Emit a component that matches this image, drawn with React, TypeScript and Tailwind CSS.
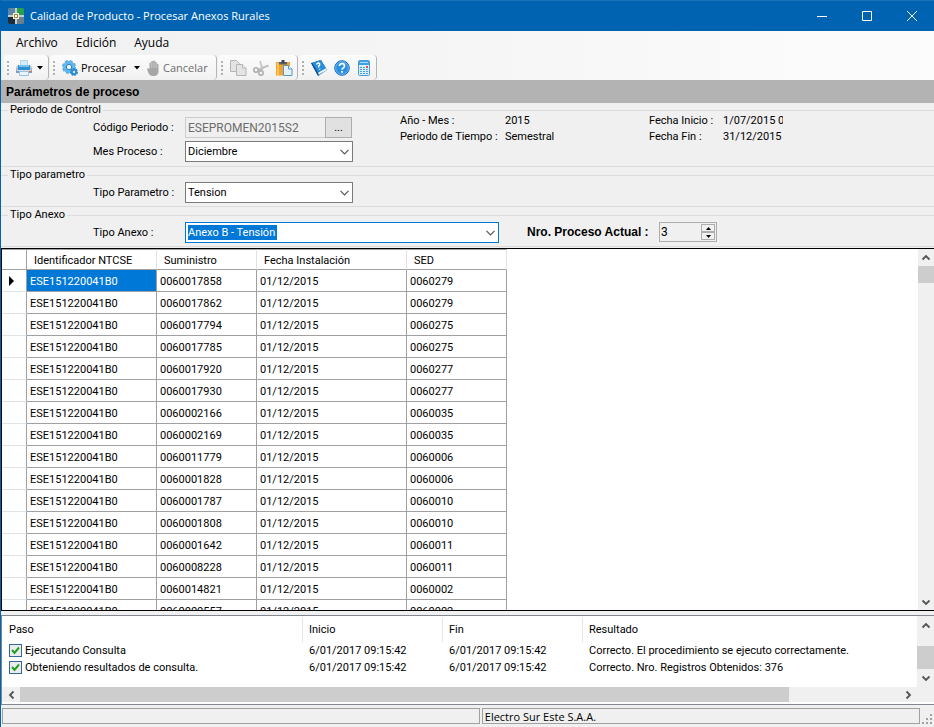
import React, { useState } from "react"

const ROWS = [
  { suministro: "0060017858", sed: "0060279" },
  { suministro: "0060017862", sed: "0060279" },
  { suministro: "0060017794", sed: "0060275" },
  { suministro: "0060017785", sed: "0060275" },
  { suministro: "0060017920", sed: "0060277" },
  { suministro: "0060017930", sed: "0060277" },
  { suministro: "0060002166", sed: "0060035" },
  { suministro: "0060002169", sed: "0060035" },
  { suministro: "0060011779", sed: "0060006" },
  { suministro: "0060001828", sed: "0060006" },
  { suministro: "0060001787", sed: "0060010" },
  { suministro: "0060001808", sed: "0060010" },
  { suministro: "0060001642", sed: "0060011" },
  { suministro: "0060008228", sed: "0060011" },
  { suministro: "0060014821", sed: "0060002" },
  { suministro: "0060000557", sed: "0060002" },
]

const STEPS = [
  {
    step: "Ejecutando Consulta",
    start: "6/01/2017 09:15:42",
    end: "6/01/2017 09:15:42",
    result: "Correcto. El procedimiento se ejecuto correctamente.",
  },
  {
    step: "Obteniendo resultados de consulta.",
    start: "6/01/2017 09:15:42",
    end: "6/01/2017 09:15:42",
    result: "Correcto. Nro. Registros Obtenidos: 376",
  },
]

export default function App() {
  return (
    <div className="flex h-screen flex-col overflow-hidden border-l border-[#0063b1] bg-[#f0f0f0] font-[Roboto,'Liberation_Sans',sans-serif] text-[11px] leading-4 text-black">
      <TitleBar />
      <div className="bg-linear-to-r from-[#f0f0f0] to-[#fcfcfc] font-['Open_Sans','Noto_Sans',sans-serif] text-[11px]">
        <MenuBar />
        <ToolBar />
      </div>
      <h2 className="flex h-[23px] shrink-0 items-center bg-[#b3b3b3] px-[5px] font-['Liberation_Sans',sans-serif] text-xs font-bold">
        Parámetros de proceso
      </h2>
      <Parameters />
      <ResultsGrid />
      <StepsList />
      <StatusBar />
    </div>
  )
}

const TitleBar = () => {
  return (
    <header className="flex h-[31px] shrink-0 items-center justify-between border-t border-[#1a72b9] bg-[#0063b1] pl-[7px] text-white">
      <div className="flex items-center gap-1.5">
        <AppLogo />
        <h1 className="font-['Open_Sans','Noto_Sans',sans-serif] text-[11px]">
          Calidad de Producto - Procesar Anexos Rurales
        </h1>
      </div>
      <div className="flex">
        <WindowButton label="Minimizar">
          <path d="M0 5.5h10" />
        </WindowButton>
        <WindowButton label="Maximizar">
          <path d="M.5 .5h9v9h-9z" />
        </WindowButton>
        <WindowButton label="Cerrar">
          <path d="M0 0l10 10M10 0L0 10" />
        </WindowButton>
      </div>
    </header>
  )
}

const WindowButton = ({
  label,
  children,
}: {
  label: string
  children: React.ReactNode
}) => {
  return (
    <button
      type="button"
      aria-label={label}
      className="flex h-7 w-[45px] items-center justify-center"
    >
      <svg width="10" height="10" fill="none" stroke="white" strokeWidth="1">
        {children}
      </svg>
    </button>
  )
}

const MenuBar = () => {
  return (
    <nav className="flex h-6 items-center gap-[18px] px-[15px] text-xs">
      {["Archivo", "Edición", "Ayuda"].map((item) => (
        <button type="button" key={item}>
          {item}
        </button>
      ))}
    </nav>
  )
}

const ToolBar = () => {
  return (
    <div className="flex h-[25px] gap-px pl-[3px]">
      <ToolStrip>
        <button
          type="button"
          aria-label="Imprimir"
          className="flex items-center gap-1"
        >
          <PrinterIcon />
          <DropArrow />
        </button>
      </ToolStrip>
      <ToolStrip>
        <button type="button" className="flex items-center gap-[3px]">
          <GearIcon />
          Procesar
        </button>
        <button type="button" aria-label="Opciones de proceso">
          <DropArrow />
        </button>
        <button
          type="button"
          disabled
          className="flex items-center gap-1 pr-[3px] text-[#6d6d6d]"
        >
          <HandIcon />
          Cancelar
        </button>
      </ToolStrip>
      <ToolStrip>
        <button type="button" aria-label="Copiar" disabled>
          <CopyIcon />
        </button>
        <button type="button" aria-label="Cortar" disabled>
          <CutIcon />
        </button>
        <button type="button" aria-label="Pegar">
          <PasteIcon />
        </button>
      </ToolStrip>
      <ToolStrip>
        <button type="button" aria-label="Contenido">
          <BookIcon />
        </button>
        <button type="button" aria-label="Ayuda">
          <HelpIcon />
        </button>
        <button type="button" aria-label="Calculadora">
          <CalculatorIcon />
        </button>
      </ToolStrip>
    </div>
  )
}

const ToolStrip = ({ children }: { children: React.ReactNode }) => {
  return (
    <div className="flex items-center gap-[7px] rounded-sm border-r border-[#b4b4b4] bg-linear-to-b from-[#fcfcfc] to-[#f1f1f1] pr-[5px] pl-[3px]">
      <svg width="2" height="14" fill="#b0b0b0">
        <path d="M0 0h2v2H0zM0 4h2v2H0zM0 8h2v2H0zM0 12h2v2H0z" />
      </svg>
      {children}
    </div>
  )
}

const Parameters = () => {
  return (
    <form className="flex shrink-0 flex-col gap-px pb-px">
      <Group title="Periodo de Control" className="h-16">
        <div className="flex items-start">
          <div className="flex flex-col gap-[3px]">
            <Field label="Código Periodo :" htmlFor="periodo">
              <input
                id="periodo"
                disabled
                defaultValue="ESEPROMEN2015S2"
                className="h-[21px] w-[140px] border border-r-0 border-[#cccccc] px-0.5 text-xs text-[#6d6d6d]"
              />
              <button
                type="button"
                aria-label="Buscar periodo"
                className="h-[21px] w-[27px] border border-[#adadad] bg-[#e1e1e1]"
              >
                ...
              </button>
            </Field>
            <Field label="Mes Proceso :" htmlFor="mes">
              <Combo id="mes" value="Diciembre" />
            </Field>
          </div>
          <dl className="-mt-1 ml-[47px] grid grid-cols-[105px_144px_74px_60px] whitespace-nowrap">
            <dt>Año - Mes :</dt>
            <dd>2015</dd>
            <dt>Fecha Inicio :</dt>
            <dd className="overflow-hidden">1/07/2015 0</dd>
            <dt>Periodo de Tiempo :</dt>
            <dd>Semestral</dd>
            <dt>Fecha Fin :</dt>
            <dd>31/12/2015</dd>
          </dl>
        </div>
      </Group>
      <Group title="Tipo parametro" className="h-[39px]">
        <Field label="Tipo Parametro :" htmlFor="parametro">
          <Combo id="parametro" value="Tension" />
        </Field>
      </Group>
      <Group title="Tipo Anexo" className="h-[39px]">
        <div className="flex items-start">
          <Field label="Tipo Anexo :" htmlFor="anexo">
            <Combo id="anexo" value="Anexo B - Tensión" active />
          </Field>
          <label
            htmlFor="proceso"
            className="ml-7 w-[132px] font-['Liberation_Sans',sans-serif] text-xs leading-5 font-bold"
          >
            Nro. Proceso Actual :
          </label>
          <Spinner />
        </div>
      </Group>
    </form>
  )
}

const Group = ({
  title,
  className,
  children,
}: {
  title: string
  className: string
  children: React.ReactNode
}) => {
  return (
    <fieldset className={`min-w-0 border-y border-[#dcdcdc] ${className}`}>
      <legend className="ml-[7px] px-0.5 leading-[14px]">{title}</legend>
      {children}
    </fieldset>
  )
}

const Field = ({
  label,
  htmlFor,
  children,
}: {
  label: string
  htmlFor: string
  children: React.ReactNode
}) => {
  return (
    <div className="flex items-center">
      <label htmlFor={htmlFor} className="w-[184px] pl-[92px]">
        {label}
      </label>
      {children}
    </div>
  )
}

const Combo = ({
  id,
  value,
  active,
}: {
  id: string
  value: string
  active?: boolean
}) => {
  return (
    <div className="relative">
      <select
        id={id}
        className={
          active
            ? "block h-[21px] w-[314px] appearance-none border border-[#0078d7] bg-white bg-[linear-gradient(#0078d7,#0078d7)] bg-[length:89px_15px] bg-[position:2px_2px] bg-no-repeat px-0.5 text-white outline-none"
            : "block h-[21px] w-[168px] appearance-none border border-[#7a7a7a] bg-white px-0.5 outline-none"
        }
      >
        <option>{value}</option>
      </select>
      <svg
        className="pointer-events-none absolute top-2 right-1"
        width="9"
        height="6"
        fill="none"
        stroke="#555"
        strokeWidth="1.2"
      >
        <path d="M.5 .8l4 4 4-4" />
      </svg>
    </div>
  )
}

const Spinner = () => {
  const [value, setValue] = useState(3)
  return (
    <div className="flex h-5 w-[58px] border border-[#adadad]">
      <input
        id="proceso"
        value={value}
        onChange={(e) => setValue(Number(e.target.value) || 0)}
        className="min-w-0 flex-1 px-px text-xs"
      />
      <div className="m-px flex w-[14px] flex-col">
        <button
          type="button"
          aria-label="Aumentar"
          onClick={() => setValue(value + 1)}
          className="flex flex-1 items-center justify-center border border-[#adadad]"
        >
          <svg width="5" height="3">
            <path d="M0 3h5L2.500 0z" />
          </svg>
        </button>
        <button
          type="button"
          aria-label="Disminuir"
          onClick={() => setValue(value - 1)}
          className="flex flex-1 items-center justify-center border border-[#adadad]"
        >
          <svg width="5" height="3">
            <path d="M0 0h5L2.500 3z" />
          </svg>
        </button>
      </div>
    </div>
  )
}

const ResultsGrid = () => {
  return (
    <main className="flex min-h-0 flex-1 border-y border-l border-black bg-white">
      <div className="min-w-0 flex-1 overflow-hidden">
        <table className="w-[505px] table-fixed border-separate border-spacing-0 text-left">
          <colgroup>
            <col className="w-[25px]" />
            <col className="w-[130px]" />
            <col className="w-[100px]" />
            <col className="w-[150px]" />
            <col className="w-[100px]" />
          </colgroup>
          <thead>
            <tr className="h-[21px]">
              <th
                aria-label="Fila"
                className="border-t border-r border-b border-[#a0a0a0]"
              />
              {["Identificador NTCSE", "Suministro", "Fecha Instalación", "SED"].map(
                (title) => (
                  <th
                    key={title}
                    className="border-t border-r border-b border-[#a0a0a0] border-r-[#e3e3e3] p-0 pt-0.5 pl-[7px] font-normal"
                  >
                    {title}
                  </th>
                )
              )}
            </tr>
          </thead>
          <tbody>
            {ROWS.map((row, index) => (
              <tr key={row.suministro} className="h-[22px]">
                <td className="border-r border-b border-[#a0a0a0] border-b-[#e3e3e3] p-0 pl-[7px]">
                  {index === 0 && (
                    <svg width="5" height="10">
                      <path d="M0 0l5 5-5 5z" />
                    </svg>
                  )}
                </td>
                <Cell selected={index === 0}>ESE151220041B0</Cell>
                <Cell>{row.suministro}</Cell>
                <Cell>01/12/2015</Cell>
                <Cell>{row.sed}</Cell>
              </tr>
            ))}
          </tbody>
        </table>
      </div>
      <div className="flex w-4 flex-col items-center bg-[#f0f0f0]">
        <ScrollArrow direction="up" />
        <div className="h-[17px] w-full bg-[#cdcdcd]" />
        <div className="flex-1" />
        <ScrollArrow direction="down" />
      </div>
    </main>
  )
}

const Cell = ({
  selected,
  children,
}: {
  selected?: boolean
  children: React.ReactNode
}) => {
  return (
    <td
      className={`border-r border-b border-[#a0a0a0] p-0 pt-0.5 pl-[3px] ${
        selected ? "bg-[#0078d7] text-white" : ""
      }`}
    >
      {children}
    </td>
  )
}

const StepsList = () => {
  return (
    <section className="mt-1 flex h-[90px] shrink-0 flex-col border-y border-l border-[#828790] bg-white pb-0.5">
      <div className="flex min-h-0 flex-1">
        <div className="min-w-0 flex-1 overflow-hidden pt-0.5">
          <table className="w-full table-fixed border-separate border-spacing-0 text-left whitespace-nowrap">
            <colgroup>
              <col className="w-[301px]" />
              <col className="w-[140px]" />
              <col className="w-[140px]" />
              <col />
            </colgroup>
            <thead>
              <tr className="h-6">
                {["Paso", "Inicio", "Fin", "Resultado"].map((title) => (
                  <th
                    key={title}
                    className="border-r border-[#e5e5e5] p-0 pl-1.5 font-normal first:pl-[7px] last:border-r-0"
                  >
                    {title}
                  </th>
                ))}
              </tr>
            </thead>
            <tbody>
              {STEPS.map((item) => (
                <tr key={item.step} className="h-[17px]">
                  <td className="p-0 pl-[7px]">
                    <label className="flex items-center gap-[3px]">
                      <CheckBox />
                      {item.step}
                    </label>
                  </td>
                  <td className="p-0 pl-1.5">{item.start}</td>
                  <td className="p-0 pl-1.5">{item.end}</td>
                  <td className="p-0 pl-1.5">{item.result}</td>
                </tr>
              ))}
            </tbody>
          </table>
        </div>
        <div className="flex w-[17px] flex-col items-center bg-[#f0f0f0] py-px">
          <ScrollArrow direction="up" />
          <div className="flex-1" />
          <div className="h-[23px] w-full bg-[#cdcdcd]" />
          <ScrollArrow direction="down" />
        </div>
      </div>
      <div className="flex h-[15px] items-center bg-[#f0f0f0] pr-[18px] pl-px">
        <ScrollArrow direction="left" />
        <div className="flex h-full flex-1">
          <div className="w-7/8 bg-[#cdcdcd]" />
        </div>
        <ScrollArrow direction="right" />
      </div>
    </section>
  )
}

const CheckBox = () => {
  return (
    <span className="relative block size-[13px]">
      <input
        type="checkbox"
        defaultChecked
        className="peer block size-[13px] appearance-none border border-[#33669a] bg-[#ececec]"
      />
      <svg
        className="pointer-events-none absolute top-0 left-0 hidden peer-checked:block"
        width="13"
        height="13"
        fill="none"
        stroke="#21a121"
        strokeWidth="2"
      >
        <path d="M3 6l2.500 3L10 3.500" />
      </svg>
    </span>
  )
}

const ARROWS = {
  up: "M1.500 6.500l3.500-3.500 3.500 3.500",
  down: "M1.500 3.500l3.500 3.500 3.500-3.500",
  left: "M6.500 1.500L3 5l3.500 3.500",
  right: "M3.500 1.500L7 5l-3.500 3.500",
}

const ScrollArrow = ({ direction }: { direction: keyof typeof ARROWS }) => {
  return (
    <button
      type="button"
      aria-label={`Desplazar ${direction}`}
      className="flex size-[17px] shrink-0 items-center justify-center"
    >
      <svg
        width="10"
        height="10"
        fill="none"
        stroke="#555"
        strokeWidth="1.8"
      >
        <path d={ARROWS[direction]} />
      </svg>
    </button>
  )
}

const StatusBar = () => {
  return (
    <footer className="flex h-[22px] shrink-0 items-start gap-0.5 pt-[3px] pl-px font-['Open_Sans','Noto_Sans',sans-serif]">
      <div className="h-4 flex-[481] border border-[#a0a0a0]" />
      <div className="h-4 flex-[439] border border-[#a0a0a0] pl-0.5 leading-[15px]">
        Electro Sur Este S.A.A.
      </div>
      <svg width="12" height="16" fill="#a0a0a0" className="shrink-0">
        <path d="M8 6h2v2H8zM4 10h2v2H4zM8 10h2v2H8zM0 14h2v2H0zM4 14h2v2H4zM8 14h2v2H8z" />
      </svg>
    </footer>
  )
}

/* Icons */

const DropArrow = () => (
  <svg width="7" height="4">
    <path d="M1 0h6L4 3.500z" />
  </svg>
)

const AppLogo = () => (
  <svg width="16" height="16">
    <rect width="16" height="16" rx="2" fill="#5f7686" />
    <path d="M2 0h6v8H0V2q0-2 2-2" fill="#5a86a3" />
    <path d="M8 0h6q2 0 2 2v6H8z" fill="#27a04c" />
    <path d="M0 8h8v8H2q-2 0-2-2z" fill="#1c2c38" />
    <path d="M8 8h8v6q0 2-2 2H8z" fill="#6c7f8d" />
    <path d="M7 0h2v6H7zM7 10h2v6H7zM0 7h6v2H0zM10 7h6v2h-6z" fill="#c3d0d8" />
    <path d="M5 5h6v6H5z" fill="#f3eee0" />
    <path d="M6 6h4v4H6z" fill="#b98a3a" />
    <path d="M7 7h2v2H7z" fill="#fff" />
  </svg>
)

const PrinterIcon = () => (
  <svg width="16" height="16">
    <path d="M4.500 .5h7V7h-7z" fill="#d4edfa" stroke="#b4d6e8" />
    <path d="M1 6h14l1 2v5H0V8z" fill="#b4c0d0" />
    <path d="M2 5h12v5H2z" fill="#2c8fd0" />
    <path d="M3 5h10v2H3z" fill="#75c2ee" />
    <path d="M0 10h16v3H0z" fill="#8598b5" />
    <path d="M1 10h14v1H1z" fill="#d5deea" />
    <path d="M3.500 11.500h9v4h-9z" fill="#e6f5fd" stroke="#9bc5df" />
    <path d="M13 11h2v1h-2z" fill="#f26a1b" />
  </svg>
)

const GearIcon = () => (
  <svg width="16" height="16">
    <circle
      cx="7"
      cy="7"
      r="6"
      fill="#5cb1ea"
      stroke="#58aee8"
      strokeWidth="2"
      strokeDasharray="2.900 1.800"
    />
    <circle cx="7" cy="7" r="5.700" fill="#63b6ee" />
    <circle
      cx="12"
      cy="12"
      r="3"
      fill="#2f8bd2"
      stroke="#2c86cc"
      strokeWidth="2"
      strokeDasharray="1.800 .8"
    />
    <circle cx="7" cy="7" r="2.700" fill="#f2faff" stroke="#2b82c6" />
    <circle cx="12" cy="12" r="1.200" fill="#d6edfb" />
  </svg>
)

const HandIcon = () => (
  <svg width="12" height="16" fill="#a6a6a6">
    <path d="M2.500 3q.9-.9 1.700 0V1.500q.9-1.100 1.800 0V1q1-1 1.900 0v1q1-.8 1.800.2V4q1-.6 1.800.3V11q0 5-5 5H6q-3.500 0-4.800-3.500L0 9q.8-1.500 2.500 0z" />
    <path d="M4.300 3v5M6.100 2v6M7.900 2.500V8M9.700 4v4" stroke="#d8d8d8" strokeWidth=".6" />
  </svg>
)

const CopyIcon = () => (
  <svg
    width="16"
    height="16"
    fill="#e4e4e4"
    stroke="#b5b5b5"
    className="overflow-visible"
  >
    <path d="M.5 .5h6l3 3v8h-9z" />
    <path d="M6.500 4.500h6l3.500 3.500v7.500H6.500z" />
    <path d="M12.500 4.500V8H16" fill="#f4f4f4" />
  </svg>
)

const CutIcon = () => (
  <svg width="16" height="16" fill="none" stroke="#acacac">
    <path d="M7 1l2.500 8L7 11" strokeWidth="1.800" stroke="#c6c6c6" />
    <path d="M15.500 5.500L9 8l-4 2" strokeWidth="2" stroke="#c0c0c0" />
    <circle cx="3" cy="10" r="2.200" strokeWidth="1.500" />
    <circle cx="8" cy="13" r="2.200" strokeWidth="1.500" />
  </svg>
)

const PasteIcon = () => (
  <svg width="16" height="16" className="overflow-visible">
    <path d="M0 2h14v13.500H0z" fill="#f2a32c" />
    <path d="M1 3h2v12H1z" fill="#fbc35e" />
    <path d="M3 2h8v2.500H3z" fill="#57616b" />
    <path d="M5.500 0h3v3h-3z" fill="#3c464f" />
    <path d="M7.500 5.500h5l3.500 3.500v6.500H7.500z" fill="#e3f2fc" stroke="#5b96c2" />
    <path d="M12.500 5.500V9H16" fill="#fff" stroke="#5b96c2" />
  </svg>
)

const BookIcon = () => (
  <svg width="16" height="16">
    <path d="M0 3l10-3 6 10-9 6z" fill="#1566ae" />
    <path d="M7 12.500l8-4.500.6 2.200L7.500 14.800z" fill="#e9f5fd" />
    <path d="M1 3l8.500-3 5.500 8-8 4.500z" fill="#2b8edb" />
    <path d="M0 3l1.200 0L7.200 13v3z" fill="#0d4f92" />
    <path
      d="M5.500 4.500q1-2 2.800-1.200 1.200 1.500-.8 2.700l.5 1.500M8.500 9l.5.700"
      fill="none"
      stroke="#fff"
      strokeWidth="1.400"
    />
  </svg>
)

const HelpIcon = () => (
  <svg width="16" height="16">
    <circle cx="8" cy="8" r="7.300" fill="#2a8fe0" stroke="#1c6db8" />
    <circle cx="8" cy="8" r="6.300" fill="none" stroke="#7fc0f2" strokeWidth=".8" />
    <path
      d="M5.500 6q0-2.300 2.500-2.300T10.500 6q0 1.200-1.300 1.900T8 9.800M8 11v1.800"
      fill="none"
      stroke="#fff"
      strokeWidth="1.700"
    />
  </svg>
)

const CalculatorIcon = () => (
  <svg width="14" height="16">
    <rect x="1.500" y=".5" width="11" height="15" rx="1" fill="#d9effb" stroke="#4d9bd3" />
    <path d="M2 1h10v4H2z" fill="#3f9fe0" />
    <path d="M3 2h8v1H3z" fill="#a9dafa" />
    <path
      d="M3 7h2v1H3zM6 7h2v1H6zM3 9h2v1H3zM6 9h2v1H6zM9 9h2v1H9zM3 11h2v1H3zM6 11h2v1H6zM9 11h2v1H9zM3 13h2v1H3zM6 13h2v1H6zM9 13h2v1H9z"
      fill="#4c9fd8"
    />
    <path d="M9 6h2v2H9z" fill="#e8503a" />
  </svg>
)
